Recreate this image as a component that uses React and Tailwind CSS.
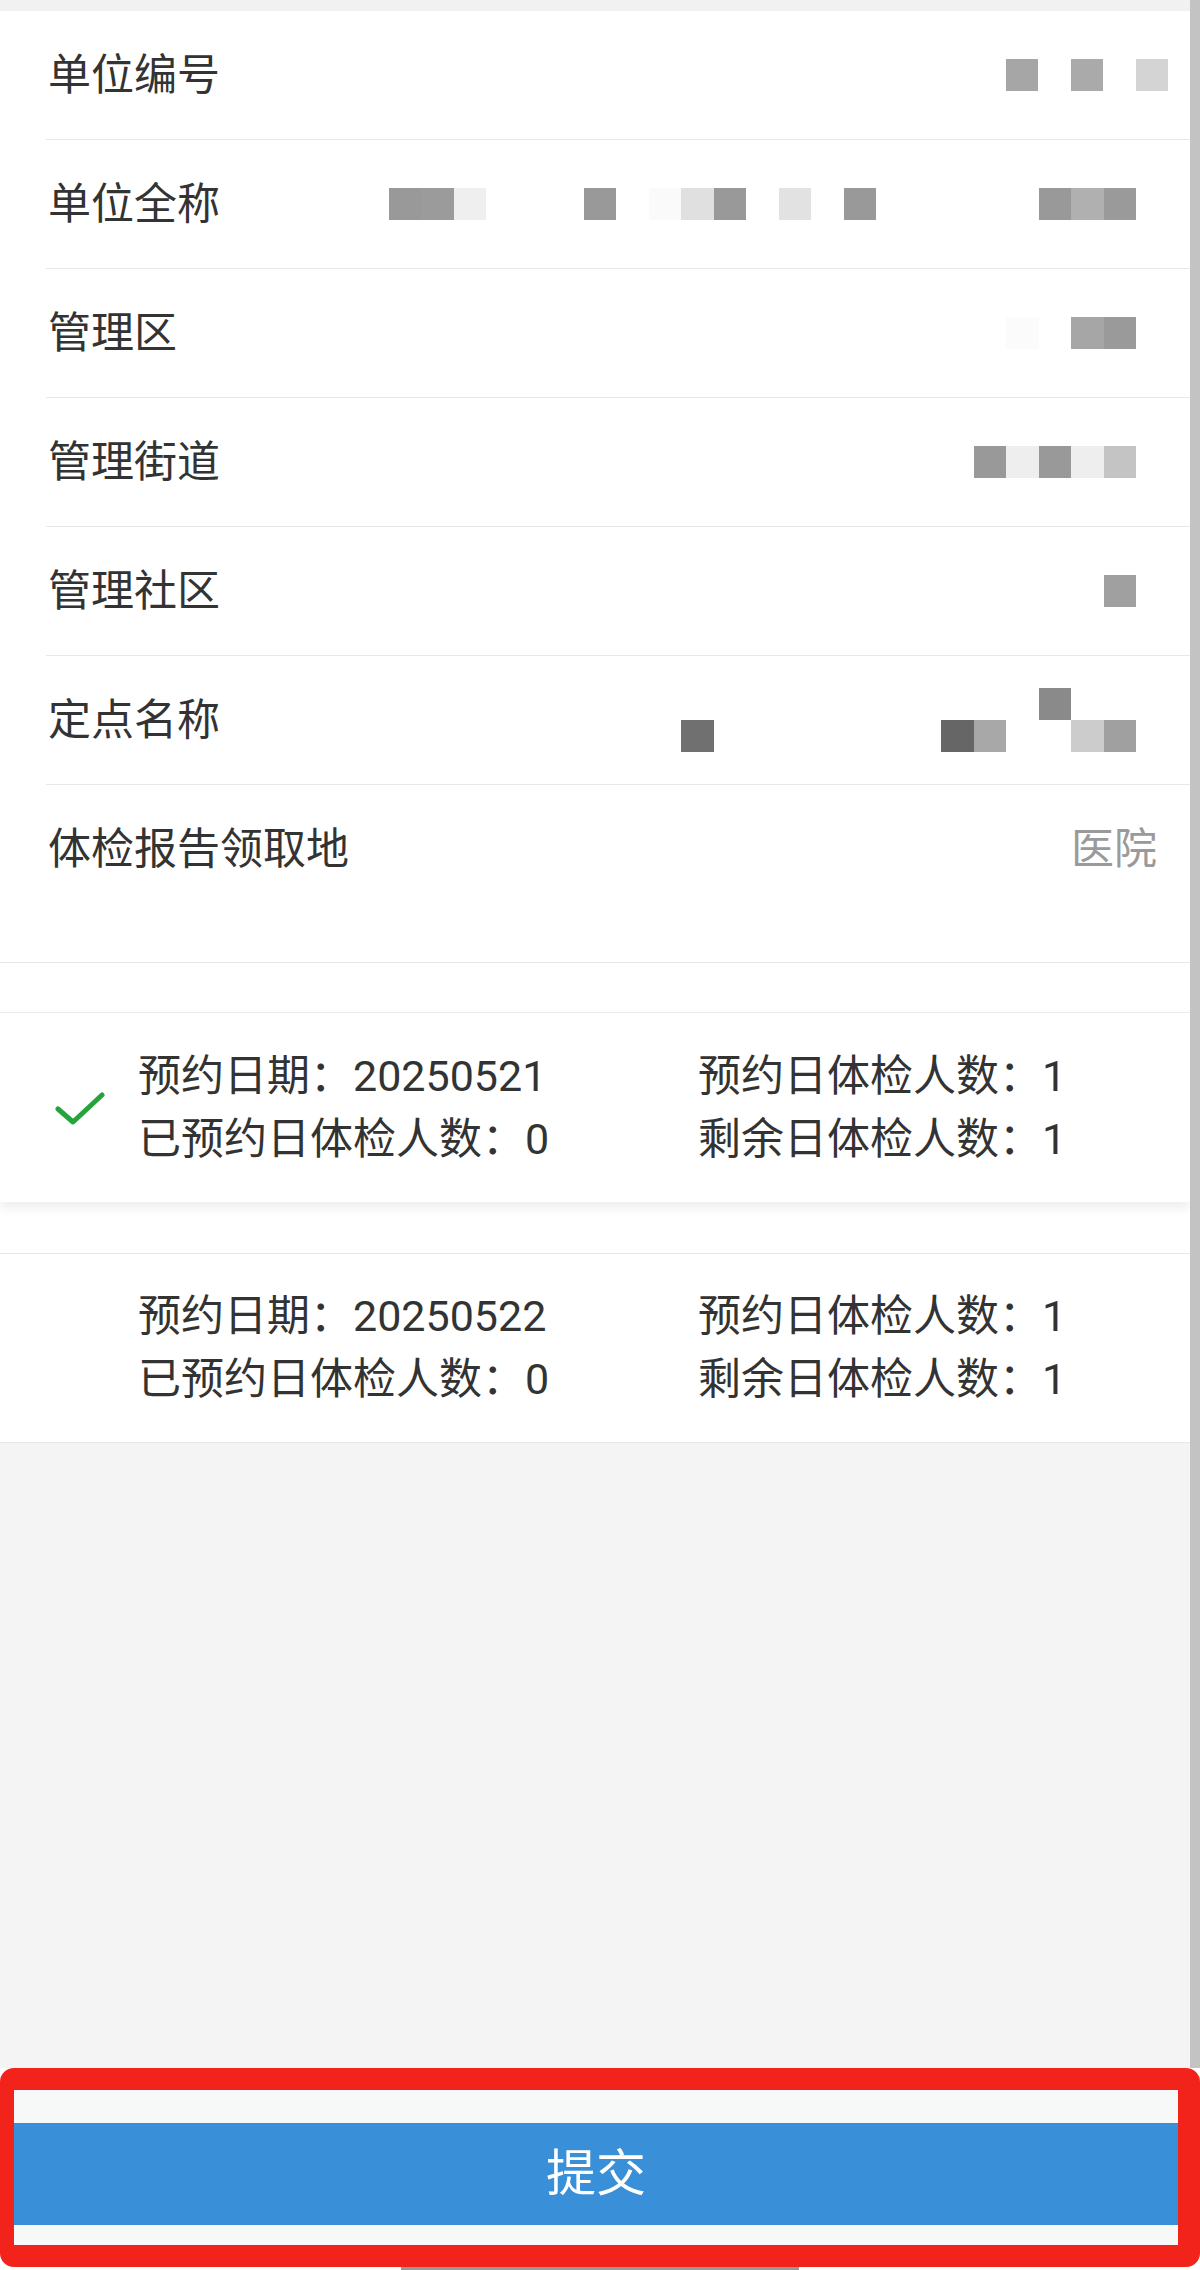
import React from 'react'

const font = "font-['Roboto','Noto_Sans_CJK_SC',sans-serif]"

// mosaic cells (pixelated values); '' = empty cell
const fields = [
  { label: '单位编号', pr: 'pr-[22px]', lines: [['bg-[#a6a6a6]', '', 'bg-[#aaaaaa]', '', 'bg-[#d4d4d4]']] },
  {
    label: '单位全称',
    pr: 'pr-[54px]',
    lines: [[
      'bg-[#999999]', 'bg-[#9b9b9b]', 'bg-[#efefef]', '', '', '', 'bg-[#999999]', '', 'bg-[#fafafa]', 'bg-[#e0e0e0]', 'bg-[#999999]', '',
      'bg-[#e2e2e2]', '', 'bg-[#999999]', '', '', '', '', '', 'bg-[#999999]', 'bg-[#b0b0b0]', 'bg-[#9a9a9a]',
    ]],
  },
  { label: '管理区', pr: 'pr-[54px]', lines: [['bg-[#fbfbfb]', '', 'bg-[#a6a6a6]', 'bg-[#9a9a9a]']] },
  { label: '管理街道', pr: 'pr-[54px]', lines: [['bg-[#999999]', 'bg-[#eeeeee]', 'bg-[#999999]', 'bg-[#eeeeee]', 'bg-[#c4c4c4]']] },
  { label: '管理社区', pr: 'pr-[54px]', lines: [['bg-[#a0a0a0]']] },
  {
    label: '定点名称',
    pr: 'pr-[54px]',
    lines: [
      ['', '', '', '', '', '', '', '', '', '', '', 'bg-[#8a8a8a]', '', ''],
      ['bg-[#707070]', '', '', '', '', '', '', '', 'bg-[#666666]', 'bg-[#a8a8a8]', '', '', 'bg-[#cccccc]', 'bg-[#a0a0a0]'],
    ],
  },
]

function Mosaic({ lines }) {
  return (
    <div className="flex flex-col">
      {lines.map((line, i) => (
        <div key={i} className="flex">
          {line.map((c, j) => (
            <div key={j} className={`w-[32.5px] h-[32px] ${c}`} />
          ))}
        </div>
      ))}
    </div>
  )
}

function Check() {
  return (
    <svg width="50" height="36" viewBox="0 0 50 36" fill="none">
      <path d="M3 17 L18 30 L47 3" stroke="#24a43a" strokeWidth="5" strokeLinecap="round" strokeLinejoin="round" />
    </svg>
  )
}

function DateCard({ date, checked, className }) {
  return (
    <div className={`flex items-center h-[190px] bg-white ${className}`}>
      <div className="w-[138px] flex pl-[55px] pt-[4px]">{checked && <Check />}</div>
      <div className="grid grid-cols-[560px_1fr] text-[43px] leading-[63px] text-[#333]">
        <span>预约日期：{date}</span>
        <span>预约日体检人数：1</span>
        <span>已预约日体检人数：0</span>
        <span>剩余日体检人数：1</span>
      </div>
    </div>
  )
}

export default function App() {
  return (
    <div className={`w-[1200px] h-[2270px] bg-white flex flex-col ${font}`}>
      <div className="flex h-[2068px]">
        <div className="w-[1190px] flex flex-col">
          <div className="h-[11px] bg-[#f1f1f1] shrink-0" />

          {/* form */}
          <div className="bg-white">
            {fields.map((f) => (
              <div key={f.label} className="ml-[46px] h-[129px] border-b border-[#e8e8e8] flex items-center">
                <span className="pl-[2px] text-[43px] text-[#333]">{f.label}</span>
                <div className={`flex-1 flex justify-end ${f.pr}`}>
                  <Mosaic lines={f.lines} />
                </div>
              </div>
            ))}
            <div className="h-[178px] border-b border-[#e8e8e8]">
              <div className="h-[128px] ml-[46px] flex items-center">
                <span className="pl-[2px] text-[43px] text-[#333]">体检报告领取地</span>
                <span className="ml-auto pr-[33px] text-[43px] text-[#9a9a9a]">医院</span>
              </div>
            </div>
          </div>

          {/* dates */}
          <div className="bg-white pt-[49px] flex flex-col gap-[51px]">
            <DateCard date="20250521" checked className="border-t border-[#ececec] shadow-[0_6px_10px_rgba(0,0,0,0.07)]" />
            <DateCard date="20250522" className="border-y border-[#e8e8e8]" />
          </div>

          <div className="flex-1 bg-[#f4f4f4]" />
        </div>
        <div className="w-[10px] bg-[#c3c3c3]" />
      </div>

      {/* submit */}
      <div className="h-[199px] border-t-[22px] border-b-[22px] border-l-[14px] border-r-[22px] border-[#f2231a] rounded-[14px] bg-[#f7f8f8] pt-[33px] pb-[20px]">
        <button className="w-full h-[102px] bg-[#398fd8] text-white text-[50px] flex items-center justify-center">提交</button>
      </div>
      <div className="h-[3px] flex justify-center">
        <div className="w-[398px] h-full bg-[#9a9a9a]" />
      </div>
    </div>
  )
}
